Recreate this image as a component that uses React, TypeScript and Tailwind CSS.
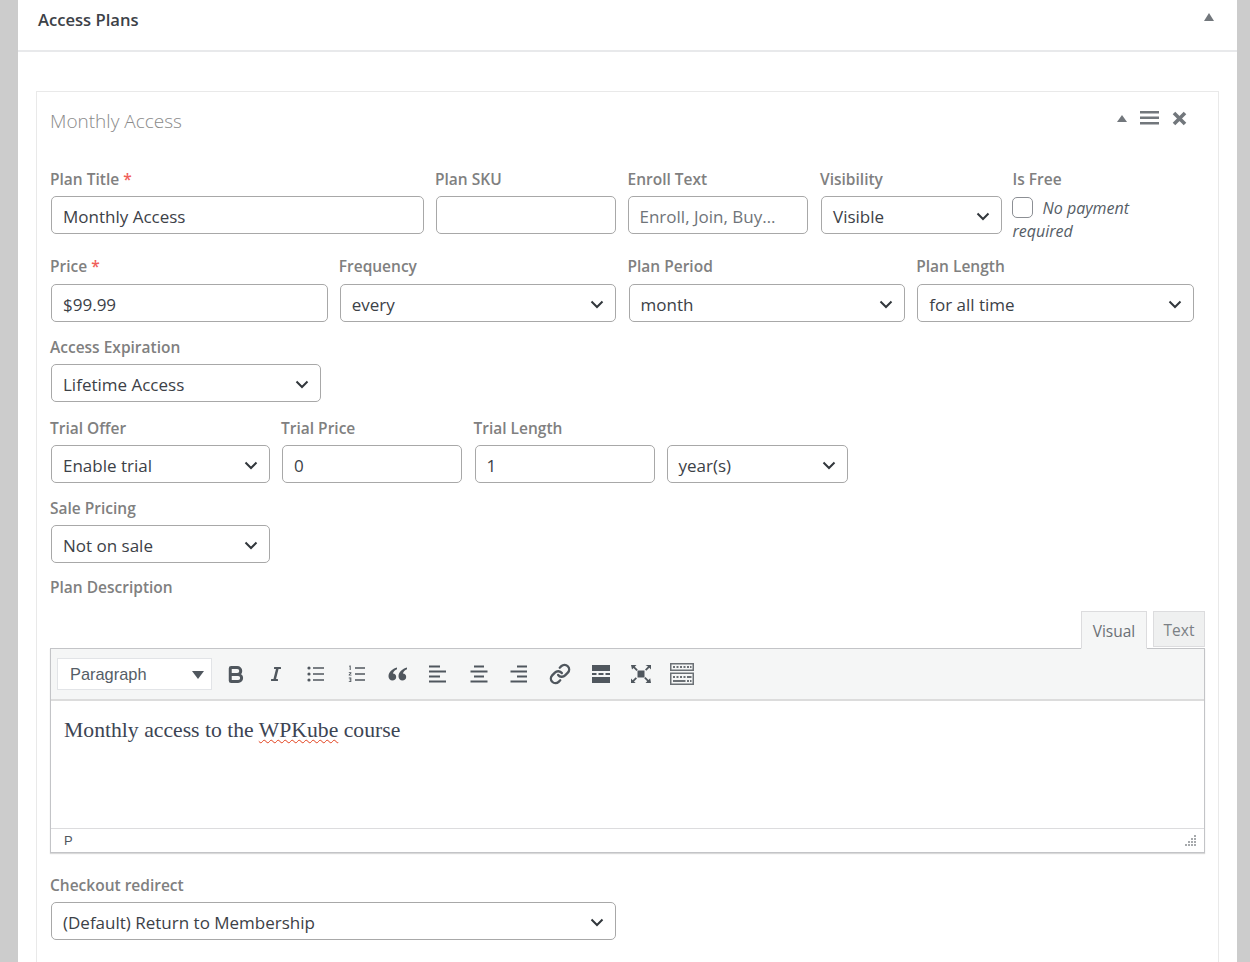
import React from 'react';
import { Bold, Link } from 'lucide-react';
import { FaItalic } from 'react-icons/fa';

const Chevron = () => (
  <svg width="14" height="9" viewBox="0 0 14 9" fill="none" className="shrink-0">
    <path d="M1.500 1.500 7 7l5.500-5.500" stroke="#32373c" strokeWidth="2" />
  </svg>
);

const FieldLabel = ({ text, required }: { text: string; required?: boolean }) => (
  <div className="h-[25px] leading-[17px] text-[15.500px] font-semibold text-[#808080] whitespace-nowrap">
    {text}
    {required && <span className="text-[#f0605a]"> *</span>}
  </div>
);

const Control = ({ value, placeholder, select, className }: { value?: string; placeholder?: string; select?: boolean; className: string }) => (
  <div className={`h-[38px] flex items-center justify-between ml-px pl-[11px] pr-[11px] pt-[3px] border border-[#a8a8a8] rounded-[5px] bg-white text-[17px] whitespace-nowrap ${placeholder ? 'text-[#6f7479]' : 'text-[#3c4147]'} ${className}`}>
    <span>{value || placeholder}</span>
    {select && <Chevron />}
  </div>
);

const Icon = ({ children }: { children: React.ReactNode }) => (
  <svg width="24" height="24" viewBox="0 0 24 24" fill="#50575e">{children}</svg>
);

const tools = [
  <Bold key="b" size={21} color="#50575e" strokeWidth={3.400} />,
  <FaItalic key="i" size={16} color="#50575e" />,
  <Icon key="ul">
    <circle cx="5" cy="6" r="1.600" /><circle cx="5" cy="12" r="1.600" /><circle cx="5" cy="18" r="1.600" />
    <path d="M9 5.200h11v1.500H9zM9 11.200h11v1.500H9zM9 17.200h11v1.500H9z" />
  </Icon>,
  <Icon key="ol">
    <path d="M10 5.200h10v1.500H10zM10 11.200h10v1.500H10zM10 17.200h10v1.500H10z" />
    <path d="M4.500 3.500h1.200V8H4.700V4.600l-.7.3zM3.800 10.200h2.600v1l-1.600 1.500h1.700v.8H3.700v-.8l1.600-1.600H3.800zM3.800 15.600h2.500v4.400H3.800v-.8h1.600v-1H4.400v-.7h1v-1.100H3.800z" />
  </Icon>,
  <Icon key="q">
    <path d="M11 5.500C6.500 6.700 2.500 10 2.500 14.300c0 2.500 1.700 4.200 3.900 4.200 2.100 0 3.800-1.500 3.800-3.600 0-2-1.400-3.400-3.300-3.400.4-1.700 1.900-3.200 4.100-4.200zM21 5.500c-4.500 1.200-8.500 4.500-8.500 8.800 0 2.500 1.700 4.200 3.900 4.200 2.100 0 3.800-1.500 3.800-3.600 0-2-1.400-3.400-3.300-3.400.4-1.700 1.900-3.200 4.100-4.200z" />
  </Icon>,
  <Icon key="l">
    <path d="M3 4h11v2H3zM3 9h17v2H3zM3 14h11v2H3zM3 19h17v2H3z" transform="translate(0 -.5)" />
  </Icon>,
  <Icon key="c">
    <path d="M7 4h10v2H7zM3.500 9h17v2h-17zM7 14h10v2H7zM3.500 19h17v2h-17z" transform="translate(0 -.5)" />
  </Icon>,
  <Icon key="r">
    <path d="M10 4h10v2H10zM3.500 9H20v2H3.500zM10 14h10v2H10zM3.500 19H20v2H3.500z" transform="translate(0 -.5)" />
  </Icon>,
  <Link key="a" size={22} color="#50575e" strokeWidth={2.600} />,
  <Icon key="hr">
    <path d="M3 3h18v6H3zM3 15h18v6H3zM3 11h4.500v2H3zM9.500 11h5v2h-5zM16.500 11H21v2h-4.500z" />
  </Icon>,
  <Icon key="fs">
    <path d="M8.500 8.500h7v7h-7z" />
    <path d="M2 3h5.500L5.800 4.700l3 3-1.300 1.300-3-3L3 7.500zM22 3v4.500L20.300 5.800l-3 3-1.300-1.300 3-3L16.500 3zM2 21v-4.500l1.700 1.700 3-3L8 16.500l-3 3L6.700 21zM22 21h-5.500l1.700-1.700-3-3 1.300-1.300 3 3 1.700-1.700z" />
  </Icon>,
  <svg key="ks" width="24" height="22" viewBox="0 0 24 22" fill="#6b7075">
    <path fillRule="evenodd" d="M0 0h24v8H0zM1.500 1.500v5h21v-5zM0 9.500h24V22H0zM1.500 11v9.500h21V11z" />
    <path d="M3 3h2v2H3zM6.500 3h2v2h-2zM10 3h2v2h-2zM13.500 3h2v2h-2zM17 3h2v2h-2zM20 3h1.500v2H20zM3 13h2v2H3zM6.500 13h2v2h-2zM10 13h2v2h-2zM13.500 13h2v2h-2zM17 13h4.500v2H17zM3 17h12.500v2H3zM17 17h2v2h-2zM20 17h1.500v2H20z" />
  </svg>,
];

const App: React.FC = () => {
  return (
    <div className="h-[962px] overflow-hidden bg-[#cccccc] pl-[18px] pr-[13px] font-['Open_Sans','Noto_Sans',sans-serif]">
      <div className="h-full bg-white">
        {/* Panel header */}
        <div className="h-[52px] border-b-2 border-[#e8e9eb] pl-[20px] pr-[23px] pt-[8px] flex justify-between">
          <h2 className="text-[16.600px] leading-[24px] font-semibold text-[#3c4147]">Access Plans</h2>
          <svg width="10" height="8" viewBox="0 0 10 8" className="mt-[5px]"><path d="M5 0l5 8H0z" fill="#72777c" /></svg>
        </div>

        {/* Plan box */}
        <div className="ml-[18px] mr-[18px] mt-[39px] border border-[#e9e9e9] pl-[13px] pr-[13px] h-[900px]">
          <div className="h-[59px] pt-[14px] flex justify-between">
            <div className="text-[19px] leading-[30px] font-light text-[#8a8a8a]">Monthly Access</div>
            <div className="flex items-center h-[24px] gap-[13px] pr-[18px]">
              <svg width="10" height="7" viewBox="0 0 10 7"><path d="M5 0l5 7H0z" fill="#72777c" /></svg>
              <svg width="19" height="14" viewBox="0 0 19 14" fill="#72777c"><path d="M0 0h19v2.500H0zM0 5.500h19V8H0zM0 11h19v2.500H0z" /></svg>
              <svg width="15" height="15" viewBox="0 0 15 15"><path d="M2 2l11 11M13 2 2 13" stroke="#72777c" strokeWidth="3.600" /></svg>
            </div>
          </div>

          {/* Row 1 */}
          <div className="flex mt-[20px]">
            <div className="w-[385px]"><FieldLabel text="Plan Title" required /><Control value="Monthly Access" className="w-[373px] mr-[11px]" /></div>
            <div className="w-[192.500px]"><FieldLabel text="Plan SKU" /><Control className="w-[180px]" /></div>
            <div className="w-[192.500px]">
              <FieldLabel text="Enroll Text" />
              <div className="-ml-px"><Control placeholder="Enroll, Join, Buy…" className="w-[180px]" /></div>
            </div>
            <div className="w-[192.500px]"><FieldLabel text="Visibility" /><Control select value="Visible" className="w-[181px]" /></div>
            <div className="w-[192.500px]">
              <FieldLabel text="Is Free" />
              <div className="h-[38px] pt-px text-[16px] leading-[23px] italic text-[#555d66] w-[150px]">
                <span className="inline-block w-[21px] h-[21px] align-[-4px] -ml-px mr-[10px] border border-[#8c8f94] rounded-[5px]" />
                No payment required
              </div>
            </div>
          </div>

          {/* Row 2 */}
          <div className="flex mt-[24px]">
            <div className="w-[288.750px]"><FieldLabel text="Price" required /><div className="pt-px"><Control value="$99.99" className="w-[277px]" /></div></div>
            <div className="w-[288.750px]"><FieldLabel text="Frequency" /><div className="pt-px"><Control select value="every" className="w-[276px]" /></div></div>
            <div className="w-[288.750px]"><FieldLabel text="Plan Period" /><div className="pt-px"><Control select value="month" className="w-[276px]" /></div></div>
            <div className="w-[288.750px]"><FieldLabel text="Plan Length" /><div className="pt-px"><Control select value="for all time" className="w-[277px]" /></div></div>
          </div>

          {/* Row 3 */}
          <div className="mt-[17px]"><FieldLabel text="Access Expiration" /><Control select value="Lifetime Access" className="w-[270px]" /></div>

          {/* Row 4 */}
          <div className="flex mt-[18px]">
            <div className="w-[231px]"><FieldLabel text="Trial Offer" /><Control select value="Enable trial" className="w-[219px]" /></div>
            <div className="w-[192.500px]"><FieldLabel text="Trial Price" /><Control value="0" className="w-[180px]" /></div>
            <div className="w-[193px]"><FieldLabel text="Trial Length" /><Control value="1" className="w-[180px]" /></div>
            <div className="w-[192.500px] pt-[25px] -ml-px"><Control select value="year(s)" className="w-[181px]" /></div>
          </div>

          {/* Row 5 */}
          <div className="mt-[17px]"><FieldLabel text="Sale Pricing" /><Control select value="Not on sale" className="w-[219px]" /></div>

          <div className="mt-[16px]"><FieldLabel text="Plan Description" /></div>

          {/* Editor tabs */}
          <div className="flex justify-end h-[37px] mt-[7px] gap-[6px] relative z-10">
            <div className="h-[38px] w-[66px] pt-[3px] flex items-center justify-center border border-[#dcdcde] border-b-[#f5f6f6] bg-[#f5f6f6] text-[15.500px] text-[#6b7075]">Visual</div>
            <div className="h-[36px] w-[52px] pt-[4px] flex items-center justify-center border border-[#dcdcde] bg-[#eff0f0] text-[15.500px] text-[#7b8085]">Text</div>
          </div>

          {/* Editor */}
          <div className="h-[205px] border border-[#c3c4c7] shadow-[0_1px_1px_rgba(0,0,0,0.15)] flex flex-col">
            <div className="h-[52px] shrink-0 bg-[#f5f6f6] border-b-2 border-[#dcdcdc] flex items-center pl-[6px]">
              <div className="w-[155px] h-[32px] bg-white border border-[#e2e4e7] flex items-center justify-between pl-[12px] pr-[7px] font-['Liberation_Sans',sans-serif] text-[16.400px] text-[#555d66]">
                Paragraph
                <svg width="12" height="8" viewBox="0 0 12 8" className="mt-[2px]"><path d="M0 0h12L6 8z" fill="#50575e" /></svg>
              </div>
              <div className="flex ml-[3px]">
                {tools.map((tool, i) => (
                  <div key={i} className="w-[40.600px] h-[30px] flex items-center justify-center">{tool}</div>
                ))}
              </div>
            </div>
            <div className="flex-1 pl-[13px] pt-[14px] font-['Liberation_Serif',serif] text-[21.700px] leading-[30px] text-[#3c4453]">
              Monthly access to the <span className="underline decoration-wavy decoration-[#e2401c] decoration-1 underline-offset-2">WPKube</span> course
            </div>
            <div className="h-[24px] shrink-0 border-t border-[#dcdcde] pl-[13px] flex items-center justify-between pr-[7px] font-['Liberation_Sans',sans-serif] text-[13px] text-[#50575e]">
              P
              <svg width="13" height="13" viewBox="0 0 13 13" fill="#a7aaad">
                <path d="M10 1h2v2h-2zM10 4h2v2h-2zM7 4h2v2H7zM10 7h2v2h-2zM7 7h2v2H7zM4 7h2v2H4zM10 10h2v2h-2zM7 10h2v2H7zM4 10h2v2H4zM1 10h2v2H1z" />
              </svg>
            </div>
          </div>

          <div className="mt-[24px]"><FieldLabel text="Checkout redirect" /><Control select value="(Default) Return to Membership" className="w-[565px]" /></div>
        </div>
      </div>
    </div>
  );
};

export default App;
